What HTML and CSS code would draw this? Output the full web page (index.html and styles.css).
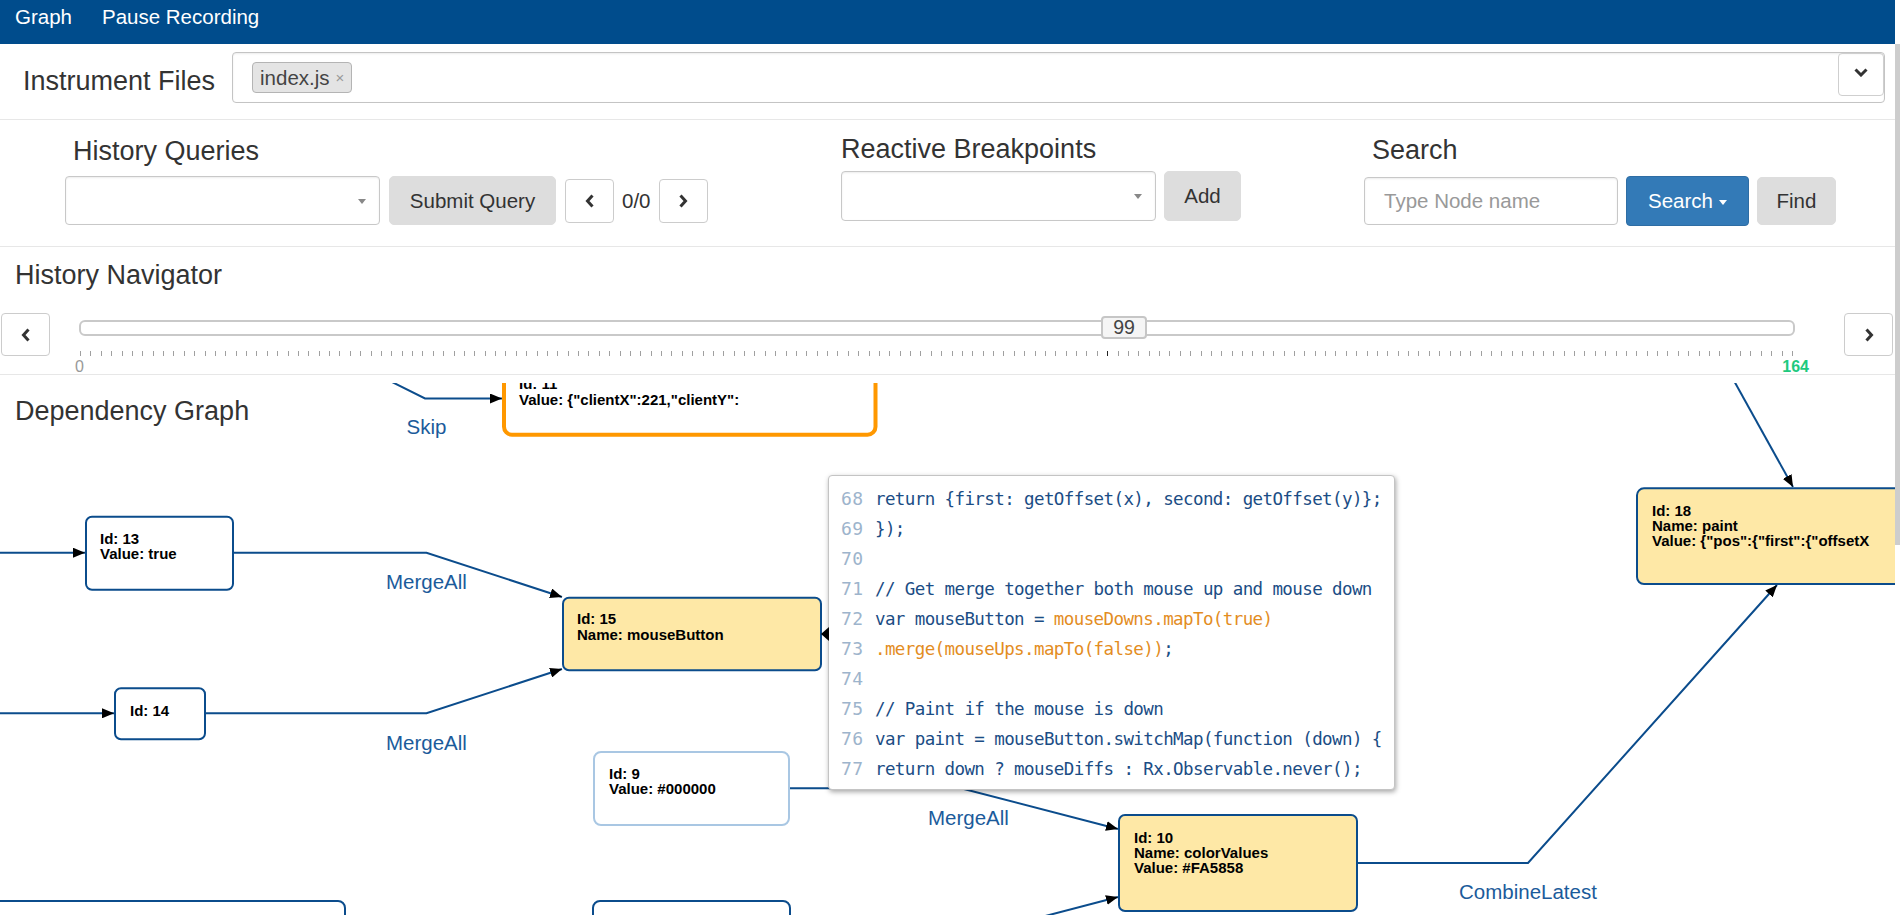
FILE: index.html
```html
<!DOCTYPE html>
<html lang="en">
<head>
<meta charset="utf-8">
<title>Reactive Debugger</title>
<link rel="stylesheet" href="styles.css">
</head>
<body>
<div class="app">
  <div class="main">
    <nav class="navbar">
      <a class="nav-link">Graph</a>
      <a class="nav-link">Pause Recording</a>
    </nav>

    <section class="instrument">
      <label class="big-label">Instrument Files</label>
      <div class="multiselect">
        <span class="tag">index.js<span class="tag-x">×</span></span>
        <span class="ms-toggle">
          <svg width="14" height="9" viewBox="0 0 14 9"><polyline points="1.5,1.5 7,7 12.5,1.5" class="chev"/></svg>
        </span>
      </div>
    </section>

    <section class="toolbar">
      <div class="group g-queries">
        <h3 class="heading inset">History Queries</h3>
        <div class="controls">
          <div class="select sel-queries"><span class="caret"></span></div>
          <button class="btn btn-gray btn-submit">Submit Query</button>
          <button class="btn btn-icon btn-pager btn-prev"><svg width="10" height="14" viewBox="0 0 10 14"><polyline points="7.5,1.5 2.5,7 7.5,12.5" class="chev"/></svg></button>
          <span class="count">0/0</span>
          <button class="btn btn-icon btn-pager"><svg width="10" height="14" viewBox="0 0 10 14"><polyline points="2.5,1.5 7.5,7 2.5,12.5" class="chev"/></svg></button>
        </div>
      </div>
      <div class="group g-breakpoints">
        <h3 class="heading">Reactive Breakpoints</h3>
        <div class="controls">
          <div class="select sel-breakpoints"><span class="caret"></span></div>
          <button class="btn btn-gray btn-add">Add</button>
        </div>
      </div>
      <div class="group g-search">
        <h3 class="heading inset">Search</h3>
        <div class="controls">
          <div class="text-input"><span class="placeholder">Type Node name</span></div>
          <button class="btn btn-primary btn-search">Search<span class="caret caret-white"></span></button>
          <button class="btn btn-gray btn-find">Find</button>
        </div>
      </div>
    </section>

    <section class="navigator">
      <h3 class="heading nav-title">History Navigator</h3>
      <div class="slider-row">
        <button class="btn btn-icon btn-step"><svg width="10" height="14" viewBox="0 0 10 14"><polyline points="7.5,1.5 2.5,7 7.5,12.5" class="chev"/></svg></button>
        <div class="slider">
          <div class="track"></div>
          <div class="handle">99</div>
          <div class="ticks"><i></i><i></i><i></i><i></i><i></i><i></i><i></i><i></i><i></i><i></i><i></i><i></i><i></i><i></i><i></i><i></i><i></i><i></i><i></i><i></i><i></i><i></i><i></i><i></i><i></i><i></i><i></i><i></i><i></i><i></i><i></i><i></i><i></i><i></i><i></i><i></i><i></i><i></i><i></i><i></i><i></i><i></i><i></i><i></i><i></i><i></i><i></i><i></i><i></i><i></i><i></i><i></i><i></i><i></i><i></i><i></i><i></i><i></i><i></i><i></i><i></i><i></i><i></i><i></i><i></i><i></i><i></i><i></i><i></i><i></i><i></i><i></i><i></i><i></i><i></i><i></i><i></i><i></i><i></i><i></i><i></i><i></i><i></i><i></i><i></i><i></i><i></i><i></i><i></i><i></i><i></i><i></i><i></i><i></i><i></i><i></i><i></i><i></i><i></i><i class="cur"></i><i></i><i></i><i></i><i></i><i></i><i></i><i></i><i></i><i></i><i></i><i></i><i></i><i></i><i></i><i></i><i></i><i></i><i></i><i></i><i></i><i></i><i></i><i></i><i></i><i></i><i></i><i></i><i></i><i></i><i></i><i></i><i></i><i></i><i></i><i></i><i></i><i></i><i></i><i></i><i></i><i></i><i></i><i></i><i></i><i></i><i></i><i></i><i></i><i></i><i></i><i></i><i></i><i></i><i></i><i></i><i></i><i></i><i></i><i></i><i></i><i></i><i></i><i></i><i></i><i></i><i></i></div>
          <div class="tick-labels"><span class="lbl-min">0</span><span class="lbl-max">164</span></div>
        </div>
        <button class="btn btn-icon btn-step btn-step-next"><svg width="10" height="14" viewBox="0 0 10 14"><polyline points="2.5,1.5 7.5,7 2.5,12.5" class="chev"/></svg></button>
      </div>
    </section>

    <section class="graph">
      <svg class="canvas" width="1895" height="532" viewBox="0 383 1895 532">
        <defs>
          <marker id="arr" viewBox="0 0 12 10" refX="12" refY="5" markerWidth="12" markerHeight="10" markerUnits="userSpaceOnUse" orient="auto">
            <path d="M0,0 L12,5 L0,10 z" class="arrowhead"/>
          </marker>
        </defs>
        <g>
          <path class="edge" d="M380,376 L425,398.5 L502,398.5" marker-end="url(#arr)"/>
          <path class="edge" d="M-5,552.7 L85,552.7" marker-end="url(#arr)"/>
          <path class="edge" d="M234,552.7 L426.5,552.7 L562,597" marker-end="url(#arr)"/>
          <path class="edge" d="M-5,713.3 L114,713.3" marker-end="url(#arr)"/>
          <path class="edge" d="M205,713.3 L426.5,713.3 L562,669" marker-end="url(#arr)"/>
          <path class="edge" d="M790,788.3 L961,788.3 L1118,829" marker-end="url(#arr)"/>
          <path class="edge" d="M1030,920 L1118,897" marker-end="url(#arr)"/>
          <path class="edge" d="M1358,863 L1528,863 L1777,585" marker-end="url(#arr)"/>
          <path class="edge" d="M1718,352 L1793,487" marker-end="url(#arr)"/>
        </g>
        <g>
          <rect class="node node-sel" x="504" y="363.4" width="371.5" height="71.3" rx="8"/>
          <text class="ntext" x="519" y="389.4">Id: 11</text>
          <text class="ntext" x="519" y="404.6">Value: {"clientX":221,"clientY":</text>

          <rect class="node" x="86" y="516.7" width="147" height="73" rx="6"/>
          <text class="ntext" x="100" y="543.7">Id: 13</text>
          <text class="ntext" x="100" y="558.9">Value: true</text>

          <rect class="node" x="115" y="688.3" width="90" height="51" rx="6"/>
          <text class="ntext" x="130" y="715.5">Id: 14</text>

          <rect class="node node-hl" x="563" y="597.7" width="258" height="72.5" rx="6"/>
          <text class="ntext" x="577" y="624.4">Id: 15</text>
          <text class="ntext" x="577" y="639.7">Name: mouseButton</text>

          <rect class="node node-dim" x="594" y="752" width="195" height="73" rx="7"/>
          <text class="ntext" x="609" y="778.6">Id: 9</text>
          <text class="ntext" x="609" y="794.2">Value: #000000</text>

          <rect class="node node-hl" x="1119" y="815" width="238" height="96" rx="6"/>
          <text class="ntext" x="1134" y="842.6">Id: 10</text>
          <text class="ntext" x="1134" y="858">Name: colorValues</text>
          <text class="ntext" x="1134" y="873.2">Value: #FA5858</text>

          <rect class="node node-hl" x="1637" y="488.3" width="300" height="95.7" rx="7"/>
          <text class="ntext" x="1652" y="515.5">Id: 18</text>
          <text class="ntext" x="1652" y="531">Name: paint</text>
          <text class="ntext" x="1652" y="546.2">Value: {"pos":{"first":{"offsetX</text>

          <rect class="node" x="-12" y="901" width="357" height="75" rx="7"/>
          <rect class="node" x="593" y="901" width="197" height="75" rx="7"/>
        </g>
        <g>
          <text class="elabel" x="406.5" y="434">Skip</text>
          <text class="elabel" x="386" y="589">MergeAll</text>
          <text class="elabel" x="386" y="750">MergeAll</text>
          <text class="elabel" x="928" y="824.5">MergeAll</text>
          <text class="elabel" x="1459" y="899">CombineLatest</text>
        </g>
      </svg>

      <h3 class="heading graph-title">Dependency Graph</h3>

      <div class="code-tip">
        <span class="tip-arrow"></span>
        <div class="code-line"><span class="ln">68</span><span class="code">return {first: getOffset(x), second: getOffset(y)};</span></div>
        <div class="code-line"><span class="ln">69</span><span class="code">});</span></div>
        <div class="code-line"><span class="ln">70</span><span class="code"></span></div>
        <div class="code-line"><span class="ln">71</span><span class="code">// Get merge together both mouse up and mouse down</span></div>
        <div class="code-line"><span class="ln">72</span><span class="code">var mouseButton = <span class="hl">mouseDowns.mapTo(true)</span></span></div>
        <div class="code-line"><span class="ln">73</span><span class="code"><span class="hl">.merge(mouseUps.mapTo(false))</span>;</span></div>
        <div class="code-line"><span class="ln">74</span><span class="code"></span></div>
        <div class="code-line"><span class="ln">75</span><span class="code">// Paint if the mouse is down</span></div>
        <div class="code-line"><span class="ln">76</span><span class="code">var paint = mouseButton.switchMap(function (down) {</span></div>
        <div class="code-line"><span class="ln">77</span><span class="code">return down ? mouseDiffs : Rx.Observable.never();</span></div>
      </div>
    </section>
  </div>
  <div class="scrollbar"><div class="thumb"></div></div>
</div>
</body>
</html>
```

FILE: styles.css
```css
* { box-sizing: border-box; }

html, body {
  margin: 0;
  padding: 0;
  background: #fff;
}

body {
  font-family: "Liberation Sans", Arial, Helvetica, sans-serif;
  color: #333;
  overflow: hidden;
  width: 1900px;
  height: 915px;
}

button {
  font-family: inherit;
  cursor: pointer;
}

.app {
  display: flex;
  width: 1900px;
  height: 915px;
}

.main {
  width: 1895px;
  flex: none;
}

.scrollbar {
  width: 5px;
  flex: none;
  padding-top: 44px;
}

.thumb {
  height: 501px;
  background: #cdcdcd;
}

/* ---------- navbar ---------- */
.navbar {
  height: 44px;
  background: #004c8c;
  display: flex;
  align-items: flex-start;
  padding-left: 15px;
  gap: 30px;
}

.nav-link {
  color: #fff;
  font-size: 20.5px;
  line-height: 34px;
  text-decoration: none;
}

/* ---------- instrument files ---------- */
.instrument {
  height: 76px;
  display: flex;
  align-items: flex-start;
  padding: 8px 10px 0 23px;
  border-bottom: 1px solid #e7e7e7;
}

.big-label {
  font-size: 27px;
  line-height: 30px;
  margin-top: 14px;
  margin-right: 17px;
  color: #333;
}

.multiselect {
  flex: 1;
  height: 51px;
  border: 1px solid #c4c4c4;
  border-radius: 4px;
  box-shadow: inset 0 1px 2px rgba(0, 0, 0, 0.08);
  display: flex;
  align-items: flex-start;
  padding: 9px 0 0 19px;
}

.tag {
  height: 31px;
  line-height: 29px;
  padding: 0 7px;
  border: 1px solid #b4b4b4;
  border-radius: 4px;
  background: #e4e4e4;
  font-size: 20.5px;
  color: #444;
  display: flex;
  align-items: center;
}

.tag-x {
  color: #999;
  font-size: 15px;
  margin-left: 6px;
}

.ms-toggle {
  margin-left: auto;
  margin-top: -9px;
  width: 46px;
  height: 43px;
  border: 1px solid #cfcfcf;
  border-radius: 4px;
  display: flex;
  align-items: center;
  justify-content: center;
  padding-bottom: 5px;
}

.chev {
  fill: none;
  stroke: #333;
  stroke-width: 3;
  stroke-linejoin: miter;
  stroke-linecap: butt;
}

/* ---------- toolbar ---------- */
.toolbar {
  height: 127px;
  display: flex;
  align-items: flex-start;
  padding: 16px 0 0 65px;
  border-bottom: 1px solid #e7e7e7;
}

.group {
  display: flex;
  flex-direction: column;
}

.g-queries { width: 776px; }
.g-breakpoints { width: 523px; margin-top: -2px; }
.g-search { margin-top: -1px; }

.heading {
  margin: 0;
  font-size: 27px;
  line-height: 30px;
  font-weight: normal;
  color: #333;
}

.heading.inset { padding-left: 8px; }

.controls {
  display: flex;
  align-items: center;
}

.g-queries .controls { margin-top: 10px; }
.g-breakpoints .controls { margin-top: 7px; }
.g-search .controls { margin-top: 11px; }

.select {
  position: relative;
  border: 1px solid #c8c8c8;
  border-radius: 4px;
  box-shadow: inset 0 1px 2px rgba(0, 0, 0, 0.08);
  background: #fff;
}

.sel-queries { width: 315px; height: 49px; }
.sel-breakpoints { width: 315px; height: 50px; }

.caret {
  display: inline-block;
  width: 0;
  height: 0;
  border-left: 4px solid transparent;
  border-right: 4px solid transparent;
  border-top: 5px solid #888;
}

.select .caret {
  position: absolute;
  right: 13px;
  top: 50%;
  margin-top: -2px;
}

.caret-white {
  border-top-color: #fff;
  margin-left: 6px;
  margin-top: 3px;
}

.btn {
  border-radius: 5px;
  font-size: 20.5px;
  color: #333;
  padding: 0;
  display: flex;
  align-items: center;
  justify-content: center;
}

.btn-gray {
  background: #dddddd;
  border: 1px solid #dddddd;
}

.btn-icon {
  background: #fff;
  border: 1px solid #cccccc;
  border-radius: 4px;
}

.btn-submit { width: 167px; height: 49px; margin-left: 9px; }
.btn-pager { width: 49px; height: 44px; }
.btn-prev { margin-left: 9px; }
.count { font-size: 20.5px; margin: 0 8px; color: #333; }
.btn-add { width: 77px; height: 50px; margin-left: 8px; }

.text-input {
  width: 254px;
  height: 48px;
  border: 1px solid #c8c8c8;
  border-radius: 4px;
  box-shadow: inset 0 1px 2px rgba(0, 0, 0, 0.08);
  padding-left: 19px;
  display: flex;
  align-items: center;
}

.placeholder {
  color: #999;
  font-size: 20.5px;
}

.btn-primary {
  background: #337ab7;
  border: 1px solid #2e6da4;
  color: #fff;
  border-radius: 4px;
}

.btn-search { width: 123px; height: 50px; margin-left: 8px; }
.btn-find { width: 79px; height: 48px; margin-left: 8px; }

/* ---------- navigator ---------- */
.navigator {
  height: 128px;
  padding-top: 13px;
  border-bottom: 1px solid #e7e7e7;
}

.nav-title { margin-left: 15px; }

.slider-row {
  display: flex;
  align-items: flex-start;
  margin-top: 23px;
}

.btn-step {
  width: 49px;
  height: 43px;
  margin-left: 1px;
}

.btn-step-next { margin-left: 49px; }

.slider {
  position: relative;
  width: 1716px;
  margin-left: 29px;
  padding-top: 7px;
}

.track {
  height: 16px;
  border: 2px solid #c9c9c9;
  border-radius: 6px;
  background: #fff;
}

.handle {
  position: absolute;
  left: 1022px;
  top: 3px;
  width: 46px;
  height: 23px;
  border: 2px solid #c6c6c6;
  border-radius: 4px;
  background: #f5f5f5;
  font-size: 19.5px;
  line-height: 19px;
  text-align: center;
  color: #444;
}

.ticks {
  display: flex;
  justify-content: space-between;
  height: 5px;
  margin-top: 15px;
  margin-left: 1px;
}

.ticks i {
  display: block;
  width: 1px;
  height: 5px;
  background: #a0a0a0;
}

.ticks i.cur { background: #222; }

.tick-labels {
  display: flex;
  justify-content: space-between;
  font-size: 16px;
  line-height: 16px;
  margin-top: 3px;
  margin-left: -4px;
  margin-right: -14px;
}

.lbl-min { color: #999; }
.lbl-max { color: #1ec97e; font-weight: bold; }

/* ---------- graph ---------- */
.graph {
  position: relative;
  height: 540px;
  overflow: hidden;
}

.canvas {
  position: absolute;
  left: 0;
  top: 8px;
  display: block;
}

.graph-title {
  position: relative;
  margin: 21px 0 0 15px;
  display: inline-block;
}

.edge {
  fill: none;
  stroke: #0b4c8c;
  stroke-width: 2;
}

.arrowhead { fill: #000; }

.node {
  fill: #fff;
  stroke: #0b4c8c;
  stroke-width: 2;
}

.node-hl { fill: #fee8a6; }
.node-dim { stroke: #a9c7e3; }
.node-sel { stroke: #ff9800; stroke-width: 4; }

.ntext {
  font-family: "Liberation Sans", Arial, sans-serif;
  font-weight: bold;
  font-size: 15px;
  fill: #000;
}

.elabel {
  font-family: "Liberation Sans", Arial, sans-serif;
  font-size: 20.5px;
  fill: #1b5b9b;
}

.code-tip {
  position: absolute;
  left: 828px;
  top: 100px;
  width: 567px;
  height: 315px;
  background: #fff;
  border: 1px solid #c4c4c4;
  border-radius: 4px;
  box-shadow: 1px 2px 5px rgba(0, 0, 0, 0.35);
  padding: 8px 0 0 12px;
}

.tip-arrow {
  position: absolute;
  left: -8px;
  top: 151px;
  width: 0;
  height: 0;
  border-top: 7px solid transparent;
  border-bottom: 7px solid transparent;
  border-right: 8px solid #000;
}

.code-line {
  display: flex;
  align-items: baseline;
  height: 30px;
  line-height: 30px;
  white-space: pre;
}

.ln {
  width: 34px;
  flex: none;
  font-family: "DejaVu Sans Mono", "Liberation Mono", monospace;
  font-size: 18px;
  letter-spacing: 0.5px;
  color: #9db4cc;
}

.code {
  font-family: "DejaVu Sans Mono", "Liberation Mono", monospace;
  font-size: 17.5px;
  letter-spacing: -0.6px;
  color: #1b4d85;
}

.code .hl { color: #e38d1f; }
```
